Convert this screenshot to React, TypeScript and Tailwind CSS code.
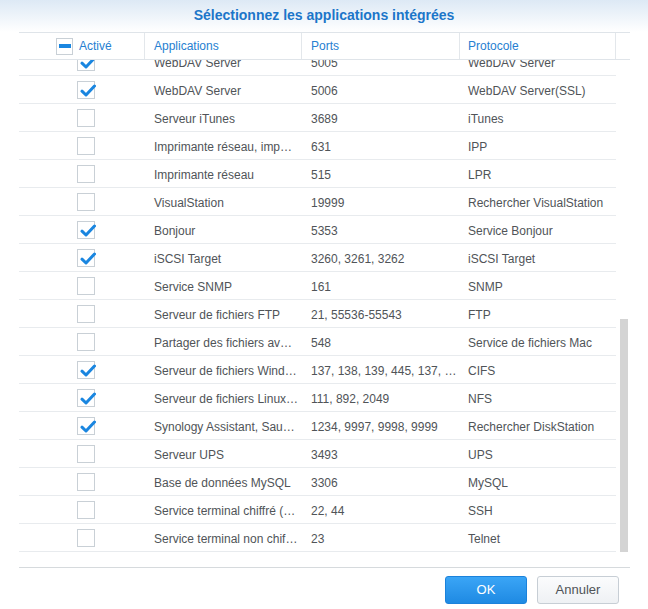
import React from "react";

type Row = { on: boolean; app: string; ports: string; proto: string };

const rows: Row[] = [
  { on: true, app: "WebDAV Server", ports: "5005", proto: "WebDAV Server" },
  { on: true, app: "WebDAV Server", ports: "5006", proto: "WebDAV Server(SSL)" },
  { on: false, app: "Serveur iTunes", ports: "3689", proto: "iTunes" },
  { on: false, app: "Imprimante réseau, imp…", ports: "631", proto: "IPP" },
  { on: false, app: "Imprimante réseau", ports: "515", proto: "LPR" },
  { on: false, app: "VisualStation", ports: "19999", proto: "Rechercher VisualStation" },
  { on: true, app: "Bonjour", ports: "5353", proto: "Service Bonjour" },
  { on: true, app: "iSCSI Target", ports: "3260, 3261, 3262", proto: "iSCSI Target" },
  { on: false, app: "Service SNMP", ports: "161", proto: "SNMP" },
  { on: false, app: "Serveur de fichiers FTP", ports: "21, 55536-55543", proto: "FTP" },
  { on: false, app: "Partager des fichiers av…", ports: "548", proto: "Service de fichiers Mac" },
  { on: true, app: "Serveur de fichiers Wind…", ports: "137, 138, 139, 445, 137, …", proto: "CIFS" },
  { on: true, app: "Serveur de fichiers Linux…", ports: "111, 892, 2049", proto: "NFS" },
  { on: true, app: "Synology Assistant, Sau…", ports: "1234, 9997, 9998, 9999", proto: "Rechercher DiskStation" },
  { on: false, app: "Serveur UPS", ports: "3493", proto: "UPS" },
  { on: false, app: "Base de données MySQL", ports: "3306", proto: "MySQL" },
  { on: false, app: "Service terminal chiffré (…", ports: "22, 44", proto: "SSH" },
  { on: false, app: "Service terminal non chif…", ports: "23", proto: "Telnet" },
];

function Check({ on }: { on: boolean }) {
  return (
    <div className="relative w-[18px] h-[18px] border border-[#c9d0d6] bg-white">
      {on && (
        <svg
          className="absolute left-[2px] top-[1px]"
          width="16"
          height="15"
          viewBox="0 0 16 15"
        >
          <path
            d="M2 8.2 L6 12 L14.5 3"
            fill="none"
            stroke="#1a86e0"
            strokeWidth="3"
            strokeLinecap="round"
            strokeLinejoin="round"
          />
        </svg>
      )}
    </div>
  );
}

export default function App() {
  return (
    <div
      className="w-[648px] h-[609px] bg-white flex flex-col overflow-hidden text-[12px] text-[#505458]"
      style={{ fontFamily: '"Liberation Sans", Arial, sans-serif' }}
    >
      {/* Title */}
      <div className="h-[32px] shrink-0 flex items-center justify-center pb-[2px] bg-gradient-to-b from-[#dde9f5] to-[#ffffff]">
        <span className="text-[14px] font-bold text-[#1c76c9]">
          Sélectionnez les applications intégrées
        </span>
      </div>

      {/* Grid */}
      <div className="ml-[19px] w-[611px] flex flex-col">
        {/* Header */}
        <div className="flex h-[28px] border-t border-b border-[#dfe4e9] text-[#2680d1]">
          <div className="w-[126px] flex items-center border-r border-[#e3e7eb]">
            <div className="ml-[37px] w-[17px] h-[17px] border border-[#c9d0d6] bg-white flex items-center justify-center">
              <div className="w-[12px] h-[4px] bg-[#1a86e0]" />
            </div>
            <span className="ml-[6px]">Activé</span>
          </div>
          <div className="w-[157px] flex items-center pl-[9px] border-r border-[#e3e7eb]">
            Applications
          </div>
          <div className="w-[158px] flex items-center pl-[9px] border-r border-[#e3e7eb]">
            Ports
          </div>
          <div className="w-[156px] flex items-center pl-[8px] border-r border-[#e3e7eb]">
            Protocole
          </div>
          <div className="flex-1" />
        </div>

        {/* Body */}
        <div className="h-[508px] flex overflow-hidden border-b border-[#d6dadd]">
          <div className="w-[597px] flex flex-col">
            <div className="-mt-[12px] flex flex-col">
              {rows.map((r, i) => (
                <div key={i} className="flex h-[28px] shrink-0 border-b border-[#e8ebee]">
                  <div className="w-[126px] flex items-center pl-[58px]">
                    <Check on={r.on} />
                  </div>
                  <div className="w-[157px] flex items-center pl-[9px] pt-[2px] whitespace-nowrap overflow-hidden">
                    {r.app}
                  </div>
                  <div className="w-[158px] flex items-center pl-[9px] pt-[2px] whitespace-nowrap overflow-hidden">
                    {r.ports}
                  </div>
                  <div className="w-[156px] flex items-center pl-[8px] pt-[2px] whitespace-nowrap overflow-hidden">
                    {r.proto}
                  </div>
                </div>
              ))}
            </div>
          </div>
          <div className="ml-[4px] w-[8px] flex flex-col">
            <div className="mt-[259px] h-[233px] bg-[#d4d4d4]" />
          </div>
        </div>
      </div>

      {/* Footer */}
      <div className="flex justify-end gap-[10px] pr-[29px] pt-[8px]">
        <button className="w-[82px] h-[28px] rounded-[3px] border border-[#1b82db] bg-gradient-to-b from-[#3aa5f6] to-[#1e8ae3] text-white text-[13px]">
          OK
        </button>
        <button className="w-[82px] h-[28px] rounded-[3px] border border-[#c7ced5] bg-gradient-to-b from-[#fbfcfd] to-[#eef1f4] text-[#4f5357] text-[13px]">
          Annuler
        </button>
      </div>
    </div>
  );
}
